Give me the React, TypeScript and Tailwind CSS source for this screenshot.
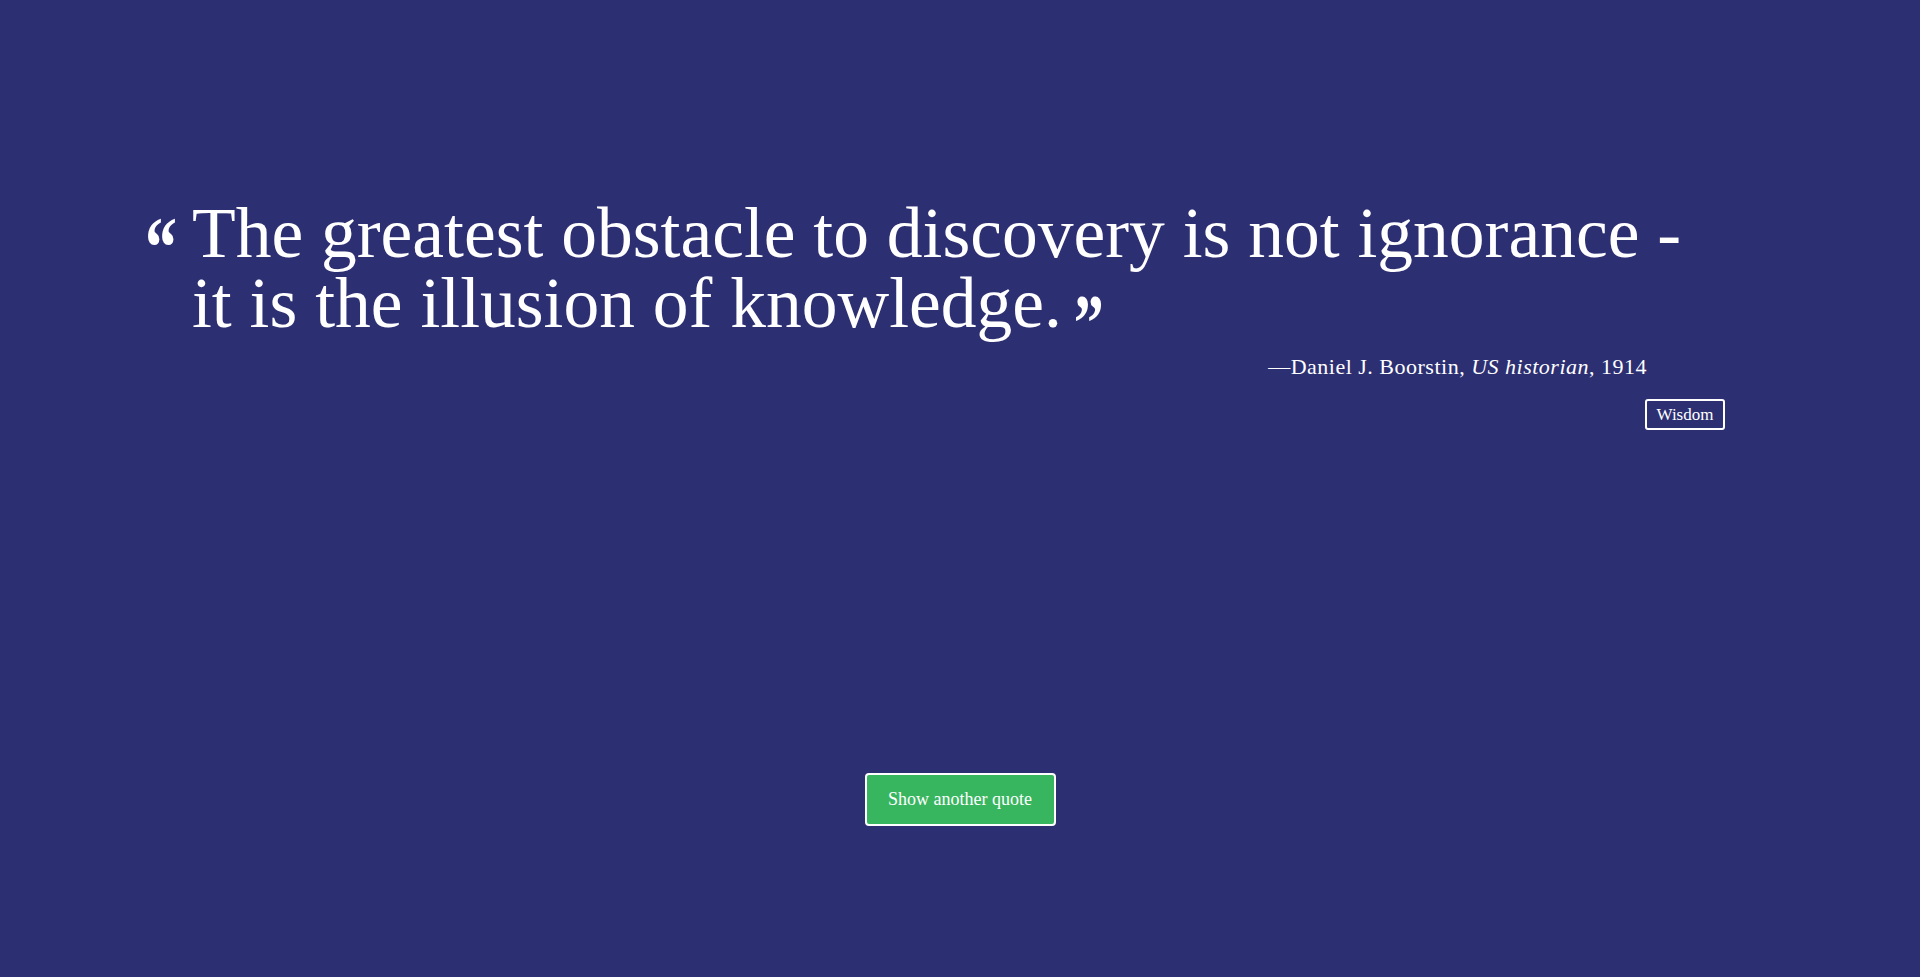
export default function App() {
  return (
    <div className="min-h-screen bg-[#2d2f73] flex flex-col font-['Liberation_Serif',serif] text-white">
      <div className="w-full pl-[145px] pr-[195px] pt-[198px]">
        <div className="flex items-baseline">
          <span className="inline-block w-[47px] shrink-0 origin-top scale-y-[1.35] text-[64px] leading-[70px] font-bold">
            &ldquo;
          </span>
          <p className="text-[71.5px] leading-[70px]">
            The greatest obstacle to discovery is not ignorance -<br />
            it is the illusion of knowledge.
            <span className="ml-[12px] inline-block origin-top scale-y-[1.35] align-[-11px] text-[60px] leading-[30px] font-bold">
              &rdquo;
            </span>
          </p>
        </div>
        <p className="mt-[14px] pr-[78px] text-right text-[22px] leading-[30px] tracking-[0.5px]">
          —Daniel J. Boorstin, <em>US historian</em>, 1914
        </p>
        <div className="mt-[17px] flex justify-end">
          <span className="flex h-[31px] w-[80px] items-center justify-center rounded-[3px] border-2 border-white text-[17px]">
            Wisdom
          </span>
        </div>
      </div>
      <div className="mt-[343px] flex justify-center">
        <button className="h-[53px] w-[191px] rounded-[4px] border-2 border-white bg-[#38b65f] text-[18px] text-white">
          Show another quote
        </button>
      </div>
    </div>
  );
}
